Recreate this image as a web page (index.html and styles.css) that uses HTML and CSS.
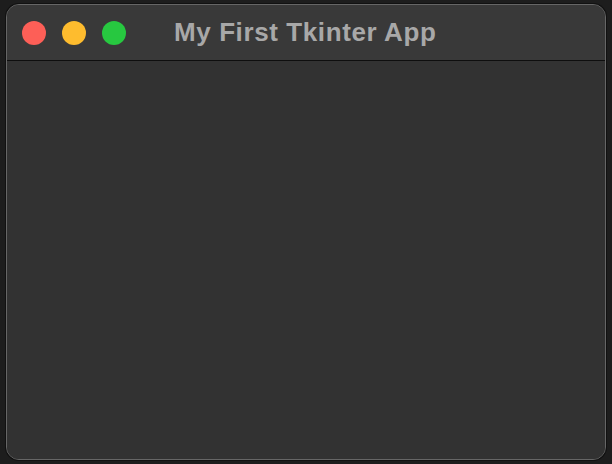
FILE: index.html
```html
<!DOCTYPE html>
<html>
<head>
<meta charset="utf-8">
<link rel="stylesheet" href="styles.css">
</head>
<body>
<div class="window">
  <div class="titlebar">
    <div class="lights">
      <span class="light red"></span>
      <span class="light yellow"></span>
      <span class="light green"></span>
    </div>
    <div class="title">My First Tkinter App</div>
  </div>
  <div class="content"></div>
</div>
</body>
</html>
```
FILE: styles.css
```css
html, body {
  margin: 0;
  padding: 0;
  background: #1d1d1d;
  width: 612px;
  height: 464px;
  overflow: hidden;
}
body {
  padding: 4px 6px 0 6px;
  box-sizing: border-box;
}
.window {
  width: 600px;
  height: 456px;
  box-sizing: border-box;
  border: 1px solid #666666;
  border-radius: 13px;
  overflow: hidden;
  display: flex;
  flex-direction: column;
  background: #323232;
  box-shadow: 0 0 0 1px #111111;
}
.titlebar {
  height: 56px;
  flex: none;
  background: #393939;
  border-bottom: 1px solid #0e0e0e;
  display: flex;
  align-items: center;
  padding-left: 15px;
  box-sizing: border-box;
}
.lights {
  display: flex;
  gap: 16px;
}
.light {
  width: 24px;
  height: 24px;
  border-radius: 50%;
  display: block;
}
.red { background: #fd5f57; }
.yellow { background: #febc2e; }
.green { background: #27c840; }
.title {
  margin-left: 48px;
  font-family: "Liberation Sans", Arial, sans-serif;
  font-weight: bold;
  font-size: 26px;
  color: #a8a8a8;
  letter-spacing: 0.6px;
}
.content {
  flex: 1;
  background: #323232;
}
```
